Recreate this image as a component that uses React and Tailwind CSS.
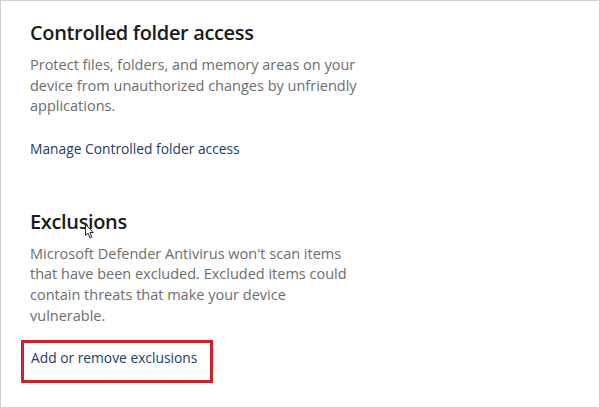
import React from 'react';

const font = { fontFamily: '"Open Sans", "Noto Sans", "Liberation Sans", sans-serif' };

function Cursor() {
  return (
    <svg className="absolute left-[84px] top-[223px]" width="10" height="15" viewBox="0 0 10 15">
      <path d="M0.5 0.5 L0.5 11.5 L3 9.2 L5 13.8 L6.8 13 L4.9 8.6 L8.4 8.6 Z" fill="#ffffff" stroke="#222222" strokeWidth="1" strokeLinejoin="round" />
    </svg>
  );
}

function Section({ title, text, link, boxed }) {
  return (
    <section>
      <h2 className="text-[20px] leading-[28px] font-semibold text-[#1b1b1b] tracking-[-0.35px]">{title}</h2>
      <p className="mt-[8px] w-[330px] text-[14.5px] leading-[20.6px] text-[#6d6d6d]">{text}</p>
      {boxed ? (
        <div className="mt-[14px] -ml-[9px] w-[192px] border-[3px] border-[#d11f2c] pl-[7px] pt-[2px] pb-[11px]">
          <a className="text-[13.8px] leading-[20px] text-[#233c64]">{link}</a>
        </div>
      ) : (
        <a className="mt-[22px] block text-[13.8px] leading-[20px] text-[#233c64]">{link}</a>
      )}
    </section>
  );
}

export default function App() {
  return (
    <div style={font} className="relative h-[408px] w-[600px] overflow-hidden border border-[#cfcfcf] bg-white">
      <div className="pl-[29px] pt-[18px]">
        <Section
          title="Controlled folder access"
          text="Protect files, folders, and memory areas on your device from unauthorized changes by unfriendly applications."
          link="Manage Controlled folder access"
        />
        <div className="mt-[49px]">
          <Section
            title="Exclusions"
            text="Microsoft Defender Antivirus won't scan items that have been excluded. Excluded items could contain threats that make your device vulnerable."
            link="Add or remove exclusions"
            boxed
          />
        </div>
      </div>
      <Cursor />
    </div>
  );
}
